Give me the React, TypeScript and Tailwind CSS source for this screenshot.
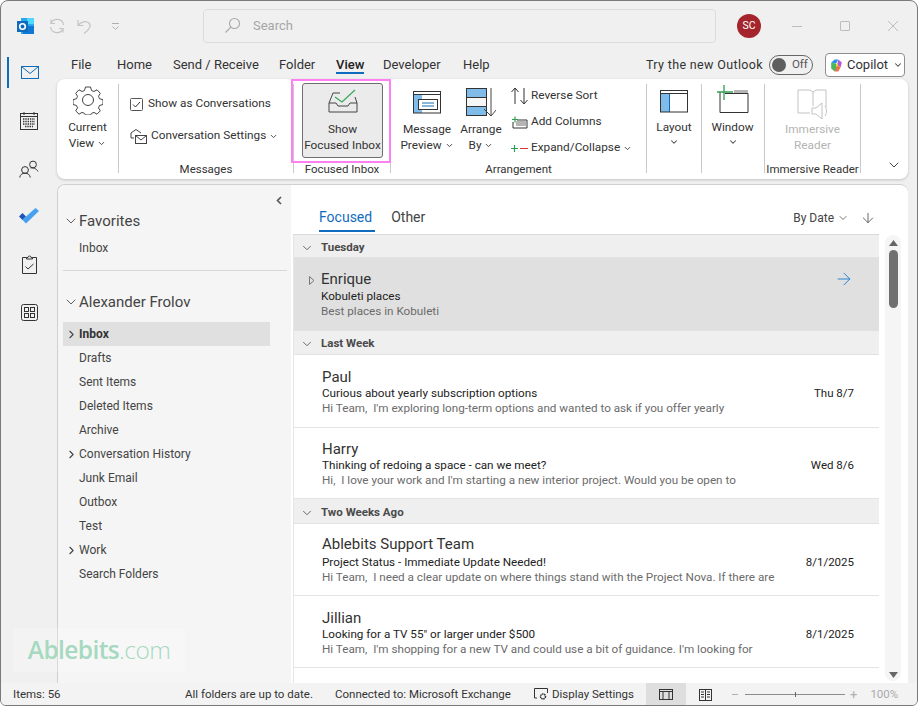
import { ArrowDown, ArrowRight, ChevronDown, ChevronRight } from "lucide-react";

const folders = [
  { name: "Inbox", active: true, arrow: true },
  { name: "Drafts" },
  { name: "Sent Items" },
  { name: "Deleted Items" },
  { name: "Archive" },
  { name: "Conversation History", arrow: true },
  { name: "Junk Email" },
  { name: "Outbox" },
  { name: "Test" },
  { name: "Work", arrow: true },
  { name: "Search Folders" },
];

const tabs = [
  { name: "File", w: "w-[46px]" },
  { name: "Home", w: "w-[56px]" },
  { name: "Send / Receive", w: "w-[106px]" },
  { name: "Folder", w: "w-[57px]" },
  { name: "View", w: "w-[47px]", active: true },
  { name: "Developer", w: "w-[80px]" },
  { name: "Help", w: "w-[40px]" },
];

function Caret() {
  return <ChevronDown className="inline-block w-[9px] h-[9px] ml-[3px] text-[#444]" strokeWidth={2.5} />;
}

function GroupHeader({ label, h = "h-[24px]", pt = "pt-[2px]" }: { label: string; h?: string; pt?: string }) {
  return (
    <div className={`${h} ${pt} flex items-center bg-[#efefef] border-b border-[#e2e2e2] pl-[6px] text-[11.5px] font-bold text-[#4a4a4a]`}>
      <ChevronDown className="w-[14px] h-[14px] text-[#555] mr-[7px]" strokeWidth={1.5} />
      {label}
    </div>
  );
}

function Mail({ name, subject, preview, date, h, top, subMt = "mt-[-1px]" }: { name: string; subject: string; preview: string; date: string; h: string; top: string; subMt?: string }) {
  return (
    <div className={`${h} ${top} border-b border-[#e3e3e3] pl-[28px] pr-[25px]`}>
      <div className="text-[15px] leading-[20px] text-[#333]">{name}</div>
      <div className={`flex justify-between text-[11.7px] leading-[15px] ${subMt} text-[#222]`}>
        <span>{subject}</span>
        <span className="text-[11.5px]">{date}</span>
      </div>
      <div className="text-[11.7px] leading-[15px] text-[#6b6b6b] whitespace-pre">{preview}</div>
    </div>
  );
}

function Group({ w, label, children }: { w: string; label?: string; children: React.ReactNode }) {
  return (
    <div className={`${w} shrink-0 h-[89px] border-r border-[#c9c9c9] flex flex-col`}>
      <div className="h-[76px] flex">{children}</div>
      <div className="h-[13px] leading-[19px] text-center text-[11.5px] text-[#333] whitespace-nowrap">{label}</div>
    </div>
  );
}

export default function App() {
  return (
    <div className="relative w-[918px] h-[706px] overflow-hidden flex flex-col bg-[#f0f0f0] border border-[#7a7a7a] rounded-t-[8px] rounded-b-[6px] font-['Roboto','Open_Sans',sans-serif] text-[#333]">
      {/* title bar */}
      <div className="h-[50px] shrink-0 flex items-center">
        <svg className="ml-[15px] w-[19px] h-[19px]" viewBox="0 0 19 19">
          <rect x="5" y="1" width="13" height="16" fill="#28a8ea" />
          <rect x="11" y="1" width="7" height="6" fill="#50d9ff" />
          <path d="M7 9h11v8H7z" fill="#0f78d4" />
          <rect x="1" y="4" width="11" height="11" fill="#0f6cbd" />
          <circle cx="6.5" cy="9.5" r="2.8" fill="none" stroke="#fff" strokeWidth="1.6" />
        </svg>
        <svg className="ml-[13px] w-[18px] h-[18px]" viewBox="0 0 18 18" fill="none" stroke="#c4c4c4" strokeWidth="1.2">
          <path d="M2.5 10A6.5 6.5 0 0 0 15 11.5M15.5 8A6.5 6.5 0 0 0 3 6.5" />
          <path d="M3 2.5v4h4M15 15.5v-4h-4" />
        </svg>
        <svg className="ml-[10px] w-[17px] h-[17px]" viewBox="0 0 17 17" fill="none" stroke="#c4c4c4" strokeWidth="1.2">
          <path d="M2 2v5.5h5.5" />
          <path d="M2 7.5 C5 3.5 10 2.5 13 5 C15.5 7.5 14 11 8 15.5" />
        </svg>
        <svg className="ml-[18px] w-[9px] h-[9px]" viewBox="0 0 9 9" fill="none" stroke="#b0b0b0">
          <path d="M1 1.5h7M1.5 4.5 4.5 7.5 7.5 4.5" />
        </svg>
        <div className="ml-[83px] w-[513px] h-[34px] mt-[-1px] flex items-center bg-[#f0f0f0] border border-[#dcdcdc] rounded-[4px]">
          <svg className="ml-[20px] w-[17px] h-[17px]" viewBox="0 0 17 17" fill="none" stroke="#a8a8a8" strokeWidth="1.1">
            <circle cx="10.5" cy="6.5" r="5" />
            <path d="M6.8 10.2 1.5 15.5" />
          </svg>
          <span className="ml-[12px] text-[13px] text-[#a6a6a6]">Search</span>
        </div>
        <div className="ml-[21px] w-[24px] h-[24px] rounded-full bg-[#a4262c] text-white text-[10.5px] flex items-center justify-center">SC</div>
        <div className="ml-[31px] w-[10px] h-px bg-[#bdbdbd]" />
        <div className="ml-[38px] w-[10px] h-[10px] border border-[#bdbdbd] rounded-[1px]" />
        <svg className="ml-[38px] w-[10px] h-[10px]" viewBox="0 0 10 10" stroke="#bdbdbd">
          <path d="M0 0 10 10M10 0 0 10" />
        </svg>
      </div>

      <div className="flex-1 flex min-h-0">
        {/* app rail */}
        <div className="relative w-[56px] shrink-0 flex flex-col items-center pt-[1px]">
          <div className="absolute left-[6px] top-[6px] w-[2px] h-[31px] bg-[#0f6cbd]" />
          <div className="h-[48px] flex items-center justify-center pb-[8px] pl-[1px]">
            <svg className="w-[18px] h-[13px]" viewBox="0 0 18 13" fill="none" stroke="#0f6cbd">
              <rect x=".5" y=".5" width="17" height="12" />
              <path d="M.5.5 9 7.5 17.5.5" />
            </svg>
          </div>
          <div className="h-[48px] flex items-center justify-center pb-[6px]">
            <svg className="w-[18px] h-[18px]" viewBox="0 0 18 18" fill="none" stroke="#333">
              <rect x=".5" y="1.5" width="17" height="16" />
              <path d="M.5 4.5h17M4 0v3M14 0v3" />
              <path d="M3 7h12M3 9.5h12M3 12h12M5 14.5h8" stroke="#333" strokeWidth="1.4" strokeDasharray="1.4 .9" />
            </svg>
          </div>
          <div className="h-[48px] flex items-center justify-center pb-[6px]">
            <svg className="w-[20px] h-[18px]" viewBox="0 0 20 18" fill="none" stroke="#333">
              <circle cx="6" cy="10" r="3.4" />
              <path d="M.7 17.5c.5-3 2.5-4.3 5.3-4.3s4.800 1.300 5.300 4.300" />
              <circle cx="14" cy="4.5" r="3.4" />
              <path d="M11.5 8c2-.5 6 .3 7.500 3.500" />
            </svg>
          </div>
          <div className="h-[48px] flex items-center justify-center pb-[8px]">
            <svg className="w-[20px] h-[16px]" viewBox="0 0 20 16">
              <path d="M0 8.5 3.5 5 7 8.500 3.500 12z" fill="#1e55b8" />
              <path d="M3.5 12 7 15.500 20 3 16.500 0 7 8.500z" fill="#45a1f0" />
            </svg>
          </div>
          <div className="h-[48px] flex items-center justify-center pb-[8px]">
            <svg className="w-[15px] h-[19px]" viewBox="0 0 15 19" fill="none" stroke="#333">
              <path d="M4.5 2.5H.5v16h14v-16h-4" />
              <path d="M4.5 4V2.500h1.500a1.500 1.500 0 0 1 3 0h1.500V4z" />
              <path d="M3.5 11.5 6 14l5.500-5" />
            </svg>
          </div>
          <div className="h-[48px] flex items-center justify-center pb-[8px]">
            <svg className="w-[17px] h-[17px]" viewBox="0 0 17 17" fill="none" stroke="#333">
              <rect x=".5" y=".5" width="16" height="16" rx="2" />
              <rect x="3.5" y="3.5" width="4" height="4" />
              <rect x="9.5" y="3.5" width="4" height="4" />
              <rect x="3.5" y="9.5" width="4" height="4" />
              <rect x="9.5" y="9.5" width="4" height="4" />
            </svg>
          </div>
        </div>

        <div className="flex-1 min-w-0 flex flex-col pr-[9px]">
          {/* ribbon tabs */}
          <div className="h-[28px] flex items-center shrink-0 text-[13px] pl-[14px]">
            {tabs.map((t) => (
              <div key={t.name} className={`${t.w} shrink-0`}>
                <span className={`relative inline-block ${t.active ? "font-medium text-[#222]" : ""}`}>
                  {t.name}
                  {t.active && <span className="absolute left-0 right-0 top-[17px] h-[2px] bg-[#0f6cbd]" />}
                </span>
              </div>
            ))}
            <span className="ml-[143px] text-[12.5px] tracking-[0.35px] whitespace-nowrap">Try the new Outlook</span>
            <div className="ml-[6px] w-[44px] h-[20px] rounded-full border border-[#666] flex items-center text-[11.5px] text-[#555] shrink-0">
              <span className="ml-[2px] w-[14px] h-[14px] rounded-full bg-[#5e5e5e]" />
              <span className="ml-[6px]">Off</span>
            </div>
            <div className="ml-[12px] w-[80px] h-[24px] rounded-[4px] bg-white border border-[#8f8f8f] flex items-center shrink-0 text-[13px]">
              <svg className="ml-[4px] w-[13px] h-[13px]" viewBox="0 0 11 11">
                <path d="M1 3 4 .5h3L5 4z" fill="#2a8df0" />
                <path d="M7 .5 10 3 9 7 6 5z" fill="#b05ad8" />
                <path d="M1 3l4 1 1 3-2 3.500L1 8z" fill="#48b85a" />
                <path d="M6 5l3 2-2 3.500H4z" fill="#f0704a" />
                <path d="M5 4h1.500L7 5.500 5.500 7z" fill="#f5c842" />
              </svg>
              <span className="ml-[4px]">Copilot</span>
              <ChevronDown className="ml-[5px] w-[10px] h-[10px] text-[#444]" strokeWidth={2.5} />
            </div>
          </div>

          {/* ribbon */}
          <div className="h-[100px] shrink-0 flex bg-white rounded-[8px] shadow-[0_1px_3px_rgba(0,0,0,0.2)] pt-[5px] text-[11.8px]">
            <Group w="w-[62px]">
              <div className="w-full flex flex-col items-center">
                <svg className="ml-[1px] w-[30px] h-[30px] mt-[1px]" viewBox="0 0 30 30" fill="none" stroke="#444">
                  <circle cx="15" cy="15" r="5.5" />
                  <path d="M12.5 2h5l1 3.500 2.500 1 3-1.700 3.300 3.500-1.800 3 1 2.400 3.500 1v4.800l-3.500 1-1 2.400 1.800 3-3.300 3.300-3-1.800-2.500 1-1 1.600h-5l-1-1.600-2.500-1-3 1.800-3.300-3.300 1.800-3-1-2.400-3.500-1v-4.800l3.500-1 1-2.400-1.800-3 3.300-3.500 3 1.700 2.500-1z" />
                </svg>
                <div className="mt-[4px] leading-[16px] text-center">Current<br />View<Caret /></div>
              </div>
            </Group>
            <Group w="w-[175px]" label="Messages">
              <div className="pl-[11px] pt-[10px] flex flex-col whitespace-nowrap">
                <div className="h-[20px] flex items-center">
                  <svg className="w-[13px] h-[13px]" viewBox="0 0 13 13" fill="none" stroke="#555">
                    <rect x=".5" y=".5" width="12" height="12" rx="1" />
                    <path d="M3 6.5 5.500 9 10 4" stroke="#333" />
                  </svg>
                  <span className="ml-[5px]">Show as Conversations</span>
                </div>
                <div className="h-[20px] mt-[12px] flex items-center">
                  <svg className="w-[17px] h-[16px]" viewBox="0 0 17 16" fill="none" stroke="#444">
                    <path d="M1 5 6 1.500 11 5M1 5v5h3" />
                    <rect x="5.5" y="7.5" width="11" height="8" fill="#fff" />
                    <path d="M5.5 7.5 11 12l5.500-4.500" />
                  </svg>
                  <span className="ml-[4px]">Conversation Settings<Caret /></span>
                </div>
              </div>
            </Group>
            <Group w="w-[97px]" label="Focused Inbox">
              <div className="ml-[8px] mt-[-1px] w-[81px] h-[75px] shrink-0 bg-[#ebebeb] border border-[#6f6f6f] rounded-[3px] flex flex-col items-center">
                <svg className="w-[30px] h-[24px] mt-[5px]" viewBox="0 0 30 24" fill="none" stroke="#444">
                  <path d="M1 14 5 4h7M29 14l-2-6" />
                  <path d="M1 14v9h28v-9" />
                  <path d="M1 14h7l2 3h10l2-3h7" />
                  <path d="M7 8l7 5L27 1" stroke="#3fa75f" strokeWidth="1.3" />
                </svg>
                <div className="mt-[8px] leading-[16px] text-center text-[#333] whitespace-nowrap">Show<br />Focused Inbox</div>
              </div>
            </Group>
            <Group w="w-[256px]" label="Arrangement">
              <div className="pl-[6px] flex">
                <div className="w-[60px] flex flex-col items-center">
                  <svg className="w-[28px] h-[23px] mt-[7px]" viewBox="0 0 28 23" fill="none">
                    <rect x="1" y="4" width="8" height="18" fill="#7fbcea" />
                    <rect x=".5" y=".5" width="27" height="21.5" stroke="#333" />
                    <path d="M.5 3.5h27" stroke="#333" />
                    <rect x="5.5" y="8.5" width="19" height="10" fill="#fff" stroke="#333" />
                    <path d="M9 12h12M9 15h12" stroke="#0f6cbd" />
                  </svg>
                  <div className="mt-[7px] leading-[16px] text-center whitespace-nowrap">Message<br />Preview<Caret /></div>
                </div>
                <div className="w-[48px] flex flex-col items-center">
                  <svg className="w-[30px] h-[30px] mt-[4px]" viewBox="0 0 30 30" fill="none">
                    <rect x=".5" y=".5" width="20" height="9" fill="#7fbcea" stroke="#333" />
                    <rect x=".5" y="9.5" width="20" height="9" fill="#f6f6f6" stroke="#333" />
                    <rect x=".5" y="18.5" width="20" height="9" fill="#7fbcea" stroke="#333" />
                    <path d="M25 0v28M18 21l7 7 6-7" stroke="#444" />
                  </svg>
                  <div className="mt-[3px] leading-[16px] text-center whitespace-nowrap">Arrange<br />By<Caret /></div>
                </div>
                <div className="ml-[6px] pt-[1px] flex flex-col gap-[4px] whitespace-nowrap">
                  <div className="h-[22px] flex items-center">
                    <svg className="w-[17px] h-[18px]" viewBox="0 0 17 18" fill="none" stroke="#333">
                      <path d="M4 17V1M.5 5 4 1l3.500 4M13 1v16M9.500 13l3.500 4 3.500-4" />
                    </svg>
                    <span className="ml-[3px]">Reverse Sort</span>
                  </div>
                  <div className="h-[22px] flex items-center">
                    <svg className="w-[17px] h-[13px]" viewBox="0 0 17 13" fill="none">
                      <rect x="5" y="5" width="10" height="5" fill="#b5b5b5" />
                      <path d="M2 6v6h14V4H6" stroke="#333" />
                      <path d="M4 .5v6M1 3.500h6" stroke="#2f9e52" strokeWidth="1.2" />
                    </svg>
                    <span className="ml-[3px]">Add Columns</span>
                  </div>
                  <div className="h-[22px] flex items-center">
                    <svg className="w-[17px] h-[9px]" viewBox="0 0 17 9" fill="none">
                      <path d="M0 4.5h7M3.5 1v7" stroke="#2f9e52" strokeWidth="1.2" />
                      <path d="M9 4.5h8" stroke="#d9352c" strokeWidth="1.2" />
                    </svg>
                    <span className="ml-[3px]">Expand/Collapse<Caret /></span>
                  </div>
                </div>
              </div>
            </Group>
            <Group w="w-[55px]">
              <div className="w-full flex flex-col items-center">
                <svg className="w-[28px] h-[23px] mt-[6px]" viewBox="0 0 28 23" fill="none">
                  <rect x="1" y="4" width="8" height="18" fill="#7fbcea" />
                  <path d="M9.5 4v18" stroke="#0f6cbd" />
                  <rect x=".5" y=".5" width="27" height="21.5" stroke="#333" />
                  <path d="M.5 3.5h27" stroke="#333" />
                </svg>
                <div className="mt-[6px] leading-[16px] text-center">Layout</div>
                <ChevronDown className="mt-[2px] w-[10px] h-[10px] text-[#444]" strokeWidth={2.5} />
              </div>
            </Group>
            <Group w="w-[63px]">
              <div className="w-full flex flex-col items-center pr-[1px]">
                <svg className="w-[32px] h-[28px] mt-[1px]" viewBox="0 0 32 28" fill="none">
                  <rect x="17" y="5" width="14" height="4" fill="#b5b5b5" />
                  <path d="M3 7v20.5h28V8.500H8" stroke="#333" />
                  <path d="M7 0v15M0 7h16" stroke="#2f9e52" strokeWidth="1.3" />
                </svg>
                <div className="mt-[6px] leading-[16px] text-center">Window</div>
                <ChevronDown className="mt-[2px] w-[10px] h-[10px] text-[#444]" strokeWidth={2.5} />
              </div>
            </Group>
            <Group w="w-[96px]" label="Immersive Reader">
              <div className="w-full flex flex-col items-center">
                <svg className="w-[32px] h-[32px] mt-[5px]" viewBox="0 0 32 32" fill="none" stroke="#c2c2c2">
                  <path d="M1 1h12l3 2 3-2h10v17M16 3v14M1 1v23h12" />
                  <path d="M15 19h4l6-5v16l-6-5h-4z" fill="#fff" />
                  <path d="M28 17c2 3 2 7 0 10" />
                </svg>
                <div className="leading-[16px] text-center text-[#b4b4b4]">Immersive<br />Reader</div>
              </div>
            </Group>
            <div className="flex-1 flex items-end justify-end pr-[6px] pb-[6px]">
              <ChevronDown className="w-[16px] h-[16px] text-[#444]" strokeWidth={1.5} />
            </div>
          </div>

          {/* nav + list */}
          <div className="mt-[5px] flex-1 min-h-0 flex border-l border-t border-[#d0d0d0] rounded-tl-[8px] rounded-tr-[8px] overflow-hidden bg-white">
            <div className="w-[233px] shrink-0 bg-[#f5f5f5] px-[5px] text-[12px] text-[#444]">
              <div className="h-[24px] flex justify-end items-center pt-[7px] pr-[4px]">
                <svg className="w-[6px] h-[9px]" viewBox="0 0 6 9" fill="none" stroke="#555" strokeWidth="1.6">
                  <path d="M5 1 1.500 4.500 5 8" />
                </svg>
              </div>
              <div className="h-[24px] flex items-center text-[15px] text-[#444]">
                <ChevronDown className="w-[16px] h-[16px] text-[#555]" strokeWidth={1.4} />
                Favorites
              </div>
              <div className="mt-[3px] h-[24px] leading-[24px] pl-[16px]">Inbox</div>
              <div className="mt-[10px] h-px w-[224px] bg-[#d6d6d6]" />
              <div className="mt-[19px] h-[24px] flex items-center text-[15px] text-[#444]">
                <ChevronDown className="w-[16px] h-[16px] text-[#555]" strokeWidth={1.4} />
                Alexander Frolov
              </div>
              <div className="mt-[8px] w-[207px]">
                {folders.map((f) => (
                  <div key={f.name} className={`h-[24px] flex items-center ${f.active ? "bg-[#e0e0e0] font-bold text-[#333]" : ""}`}>
                    <div className="w-[16px] flex justify-end pr-[1px]">
                      {f.arrow && <ChevronRight className="w-[13px] h-[13px] text-[#444]" strokeWidth={2} />}
                    </div>
                    {f.name}
                  </div>
                ))}
              </div>
            </div>

            <div className="flex-1 min-w-0 flex flex-col">
              <div className="h-[50px] shrink-0 flex pl-[2px]">
                <div className="w-[586px] shrink-0 h-[50px] border-b border-[#d9d9d9] flex items-center pt-[16px] text-[14px]">
                  <div className="ml-[26px] relative text-[#0f6cbd]">
                    Focused
                    <span className="absolute left-0 right-[-3px] top-[23px] h-[2px] bg-[#0f6cbd]" />
                  </div>
                  <div className="ml-[19px] text-[#444]">Other</div>
                  <div className="ml-auto flex items-center text-[12px] text-[#444] pr-[2px]">
                    By Date
                    <ChevronDown className="ml-[3px] w-[12px] h-[12px]" strokeWidth={1.5} />
                    <ArrowDown className="ml-[11px] mr-[1px] w-[16px] h-[16px]" strokeWidth={1.2} />
                  </div>
                </div>
              </div>
              <div className="flex-1 min-h-0 flex">
                <div className="w-[586px] ml-[2px] shrink-0 border-l border-[#e6e6e6]">
                  <GroupHeader label="Tuesday" h="h-[23px]" pt="pt-[4px]" />
                  <div className="relative h-[73px] bg-[#e0e0e0] pl-[27px] pr-[25px] pt-[11px]">
                    <svg className="absolute left-[15px] top-[18px] w-[6px] h-[9px]" viewBox="0 0 6 9" fill="none" stroke="#777">
                      <path d="M.5.5 5 4.500.5 8.500z" />
                    </svg>
                    <div className="flex justify-between">
                      <span className="text-[15px] leading-[20px] text-[#333]">Enrique</span>
                      <ArrowRight className="w-[20px] h-[20px] text-[#2a84d2]" strokeWidth={1.2} />
                    </div>
                    <div className="text-[11.7px] leading-[15px] text-[#222]">Kobuleti places</div>
                    <div className="text-[11.7px] leading-[15px] text-[#6b6b6b]">Best places in Kobuleti</div>
                  </div>
                  <GroupHeader label="Last Week" />
                  <Mail h="h-[73px]" top="pt-[12px]" name="Paul" subject="Curious about yearly subscription options" date="Thu 8/7" preview="Hi Team,  I'm exploring long-term options and wanted to ask if you offer yearly" />
                  <Mail h="h-[71px]" top="pt-[11px]" name="Harry" subject="Thinking of redoing a space - can we meet?" date="Wed 8/6" preview="Hi,  I love your work and I'm starting a new interior project. Would you be open to" />
                  <GroupHeader label="Two Weeks Ago" h="h-[25px]" pt="pt-[3px]" />
                  <Mail h="h-[72px]" top="pt-[10px]" subMt="mt-[1px]" name="Ablebits Support Team" subject="Project Status - Immediate Update Needed!" date="8/1/2025" preview="Hi Team,  I need a clear update on where things stand with the Project Nova. If there are" />
                  <Mail h="h-[72px]" top="pt-[12px]" name="Jillian" subject="Looking for a TV 55&quot; or larger under $500" date="8/1/2025" preview="Hi Team,  I'm shopping for a new TV and could use a bit of guidance. I'm looking for" />
                </div>
                <div className="ml-[6px] w-[16px] h-[446px] bg-[#f5f5f5] rounded-[8px] flex flex-col items-center shrink-0 pt-[5px]">
                  <svg className="w-[9px] h-[6px]" viewBox="0 0 9 6"><path d="M0 6 4.500 0 9 6z" fill="#666" /></svg>
                  <div className="mt-[4px] w-[9px] h-[58px] rounded-full bg-[#707070]" />
                  <svg className="mt-auto mb-[3px] w-[9px] h-[6px]" viewBox="0 0 9 6"><path d="M0 0h9L4.500 6z" fill="#666" /></svg>
                </div>
              </div>
            </div>
          </div>
        </div>
      </div>

      {/* status bar */}
      <div className="h-[22px] shrink-0 flex items-center bg-[#f3f3f3] text-[11.5px] text-[#333] pt-[1px]">
        <span className="ml-[12px] w-[172px]">Items: 56</span>
        <span className="w-[150px]">All folders are up to date.</span>
        <span className="w-[199px] whitespace-nowrap">Connected to: Microsoft Exchange</span>
        <svg className="w-[15px] h-[13px]" viewBox="0 0 15 13" fill="none" stroke="#333">
          <path d="M3 10H.5V.5h13V5" />
          <circle cx="9" cy="8.5" r="2.5" strokeDasharray="1.500 .6" strokeWidth="1.5" />
        </svg>
        <span className="ml-[3px] w-[94px] whitespace-nowrap">Display Settings</span>
        <div className="w-[40px] h-[22px] mt-[-1px] bg-[#dedede] flex items-center justify-center">
          <svg className="w-[14px] h-[11px]" viewBox="0 0 14 11" fill="none" stroke="#333">
            <rect x=".5" y=".5" width="13" height="10" />
            <path d="M.5 2.500h13M4 2.500v8M10 2.500v8" />
          </svg>
        </div>
        <svg className="ml-[13px] w-[13px] h-[12px]" viewBox="0 0 13 12" fill="none" stroke="#333">
          <rect x=".5" y=".5" width="12" height="11" />
          <path d="M6.500.5v11M2 3h3M2 5.500h3M2 8h3M8 3h3M8 5.500h3M8 8h3" />
        </svg>
        <div className="ml-[20px] w-[6px] h-px bg-[#b0b0b0]" />
        <div className="relative ml-[7px] w-[100px] h-px bg-[#8c8c8c]">
          <span className="absolute left-[50px] top-[-2px] w-px h-[5px] bg-[#666]" />
        </div>
        <span className="ml-[5px] text-[13px] text-[#b0b0b0] leading-none">+</span>
        <span className="ml-[13px] text-[#aaa]">100%</span>
      </div>

      {/* highlight around Show Focused Inbox */}
      <div className="absolute left-[290px] top-[78px] w-[100px] h-[84px] border-2 border-[#ff80f0]" />

      {/* watermark */}
      <div className="absolute left-[12px] top-[627px] w-[172px] h-[44px] bg-white/20 flex items-center justify-center text-[24.5px] text-[#a6d9bf] font-['Open_Sans',sans-serif] tracking-[-0.6px]">
        <span className="font-semibold">Ablebits</span>
        <span className="font-light">.com</span>
      </div>
    </div>
  );
}
